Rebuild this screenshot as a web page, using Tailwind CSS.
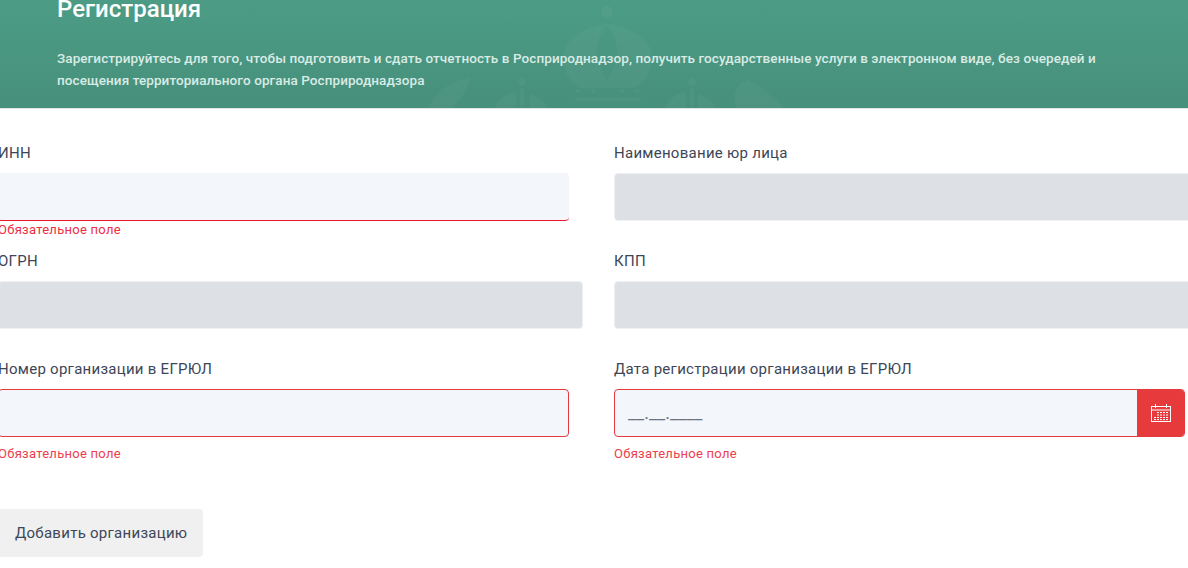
<!DOCTYPE html>
<html lang="ru">
<head>
<meta charset="utf-8">
<script src="https://cdn.jsdelivr.net/npm/@tailwindcss/browser@4"></script>
</head>
<body class="bg-white overflow-hidden h-[568px] font-['Roboto',sans-serif]">
<header class="relative h-[109px] overflow-hidden border-b border-[#dfe7e4] bg-gradient-to-b from-[#4c9c85] to-[#47907b] pl-[57px] pr-[80px]">
  <svg class="absolute left-[400px] top-0 w-[420px] h-[108px]" viewBox="0 0 420 108" fill="#ffffff" fill-opacity="0.035">
    <circle cx="207" cy="12" r="6"/>
    <path fill-rule="evenodd" d="M207 24C186 26 163 38 163 58c0 14 8 25 17 30h54c10-5 18-16 18-30 0-20-24-32-45-34zM207 26c-7 6-10 16-10 26 0 10 5 20 10 28 5-8 10-18 10-28 0-10-3-20-10-26z"/>
    <circle cx="178" cy="91" r="2"/><circle cx="193" cy="91" r="2"/><circle cx="222" cy="91" r="2"/><circle cx="237" cy="91" r="2"/>
    <rect x="175" y="98" width="66" height="3"/>
    <circle cx="122" cy="82" r="4"/><circle cx="292" cy="82" r="4"/>
    <rect x="120" y="88" width="4" height="20"/><rect x="290" y="88" width="4" height="20"/>
    <path d="M28 108C36 92 50 80 70 78c-2 12-10 22-18 30z"/>
    <path d="M94 108c4-8 14-16 22-16v16z"/>
    <path d="M130 108v-14c8 2 14 8 18 14z"/>
    <path d="M264 108c4-8 14-16 22-16v16z"/>
    <path d="M298 108v-14c8 2 14 8 18 14z"/>
    <path d="M336 108c-4-14 0-24 12-28 12 6 28 18 36 28z"/>
  </svg>
  <h1 class="relative mt-[-5px] text-[24px] leading-[28px] font-medium text-white">Регистрация</h1>
  <p class="relative mt-[24px] text-[13.5px] leading-[22px] font-medium tracking-[0.08px] text-[#d9ebe5]">Зарегистрируйтесь для того, чтобы подготовить и сдать отчетность в Росприроднадзор, получить государственные услуги в электронном виде, без очередей и посещения территориального органа Росприроднадзора</p>
</header>
<main class="ml-[-2px] w-[1300px] pt-[33px] text-[15px] tracking-[0.27px] text-[#3d4656]">
  <div class="grid grid-cols-[585px_1fr] gap-x-[31px] gap-y-[10px]">
    <div class="h-[98px]">
      <label class="block h-[31px] leading-[23px]">ИНН</label>
      <div class="mr-[14px] h-[48px] rounded-[4px] border-b border-[#f0142f] bg-[#f3f6fb]"></div>
      <p class="mt-[1px] h-[16px] text-[13px] leading-[16px] text-[#ee2d3f]">Обязательное поле</p>
    </div>
    <div class="h-[98px]">
      <label class="block h-[31px] leading-[23px]">Наименование юр лица</label>
      <div class="h-[48px] rounded-[4px] border border-[#eef0f3] bg-[#dde0e5]"></div>
    </div>
    <div class="h-[98px]">
      <label class="block h-[31px] leading-[23px]">ОГРН</label>
      <div class="h-[48px] rounded-[4px] border border-[#eef0f3] bg-[#dde0e5]"></div>
    </div>
    <div class="h-[98px]">
      <label class="block h-[31px] leading-[23px]">КПП</label>
      <div class="h-[48px] rounded-[4px] border border-[#eef0f3] bg-[#dde0e5]"></div>
    </div>
    <div class="h-[98px]">
      <label class="block h-[31px] leading-[23px]">Номер организации в ЕГРЮЛ</label>
      <div class="mr-[14px] h-[48px] rounded-[4px] border border-[#e53a3d] bg-[#f3f6fb]"></div>
      <p class="mt-[9px] h-[16px] text-[13px] leading-[16px] text-[#ee3d4c]">Обязательное поле</p>
    </div>
    <div class="h-[98px] w-[571px]">
      <label class="block h-[31px] leading-[23px]">Дата регистрации организации в ЕГРЮЛ</label>
      <div class="flex h-[48px] rounded-[4px] border border-[#e53a3d] bg-[#f3f6fb]">
        <span class="flex-1 pl-[13px] pt-[12px] text-[18px] leading-[22px] tracking-normal text-[#6b7280]">__.__.____</span>
        <span class="flex w-[47px] items-center justify-center rounded-r-[3px] bg-[#e73a3c]">
          <svg class="h-[20px] w-[22px]" viewBox="0 0 22 20" fill="none" stroke="#ffffff" stroke-width="1">
            <rect x="1.5" y="3.5" width="19" height="15"/>
            <path d="M1.5 7h19"/>
            <path d="M5.5 1v4M16.5 1v4" />
            <path d="M7 9.5h11M7 12h11M4 14.5h14M4 16.6h14" stroke-dasharray="2 1"/>
          </svg>
        </span>
      </div>
      <p class="mt-[9px] h-[16px] text-[13px] leading-[16px] text-[#ee3d4c]">Обязательное поле</p>
    </div>
  </div>
  <button class="mt-[53px] block h-[48px] w-[205px] rounded-[4px] bg-[#f0f0f0] pl-[17px] text-left text-[15px] text-[#3d4656]">Добавить организацию</button>
</main>
</body>
</html>
